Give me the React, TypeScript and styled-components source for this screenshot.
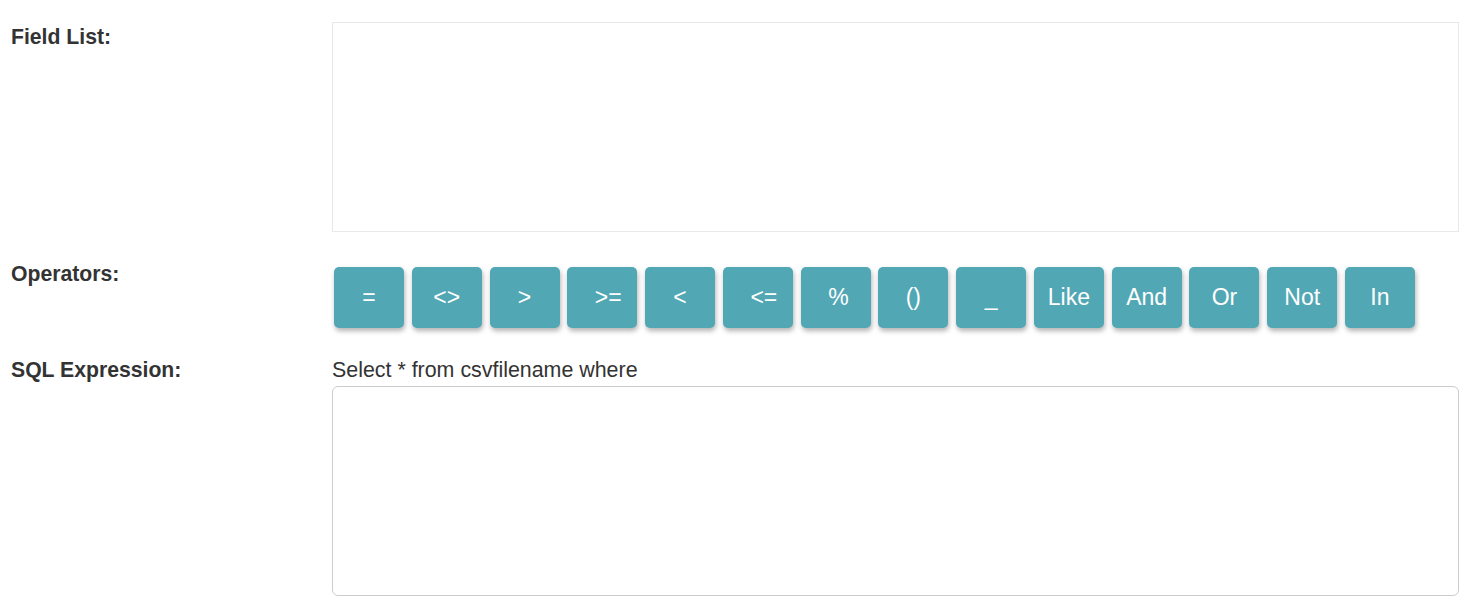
import React from "react";
import styled, { createGlobalStyle } from "styled-components";

const GlobalStyle = createGlobalStyle`
  html, body {
    margin: 0;
    padding: 0;
    background: #ffffff;
  }
  body {
    font-family: "Liberation Sans", Arial, Helvetica, sans-serif;
    color: #333333;
  }
`;

const Page = styled.div`
  display: grid;
  grid-template-columns: 321px 1fr;
  row-gap: 27px;
  padding: 22px 12px 16px 11px;
  font-size: 21px;
  line-height: 30px;
`;

const Label = styled.div`
  font-weight: bold;
  font-size: 21.2px;
  line-height: 30px;
  color: #333333;
`;

const Cell = styled.div`
  display: flex;
  flex-direction: column;
  min-width: 0;
`;

const FieldListBox = styled.div`
  height: 210px;
  border: 1px solid #e8e8e8;
  box-sizing: border-box;
  background: #ffffff;
`;

const ButtonRow = styled.div`
  display: flex;
  gap: 7.78px;
  padding: 8px 0 0 2px;
`;

const OpButton = styled.button<{ $shift?: number }>`
  width: 70px;
  height: 61px;
  flex: 0 0 70px;
  box-sizing: border-box;
  border: none;
  border-radius: 5px;
  background: #52a7b5;
  color: #ffffff;
  font-family: "Liberation Sans", Arial, Helvetica, sans-serif;
  font-size: 23px;
  line-height: 1;
  display: flex;
  align-items: center;
  justify-content: center;
  padding: 0 0 0 ${(p) => (p.$shift ?? 0) * 2}px;
  box-shadow: 1px 3px 5px rgba(0, 0, 0, 0.3);
  cursor: pointer;
`;

const Caption = styled.div`
  font-size: 21.4px;
  line-height: 31px;
  color: #333333;
`;

const SqlArea = styled.textarea`
  height: 210px;
  width: 100%;
  box-sizing: border-box;
  border: 1px solid #cccccc;
  border-radius: 6px;
  resize: none;
  font-family: "Liberation Sans", Arial, Helvetica, sans-serif;
  font-size: 21px;
  padding: 6px 12px;
  outline: none;
`;

const operators: { text: string; shift?: number }[] = [
  { text: "=" },
  { text: "<>" },
  { text: ">" },
  { text: ">=", shift: 6 },
  { text: "<" },
  { text: "<=", shift: 6 },
  { text: "%", shift: 3 },
  { text: "()" },
  { text: "_" },
  { text: "Like" },
  { text: "And" },
  { text: "Or" },
  { text: "Not" },
  { text: "In" },
];

export default function App() {
  return (
    <>
      <GlobalStyle />
      <Page>
        <Label>Field List:</Label>
        <Cell>
          <FieldListBox />
        </Cell>

        <Label>Operators:</Label>
        <Cell>
          <ButtonRow>
            {operators.map((op) => (
              <OpButton key={op.text} $shift={op.shift}>
                {op.text}
              </OpButton>
            ))}
          </ButtonRow>
        </Cell>

        <Label>SQL Expression:</Label>
        <Cell>
          <Caption>Select * from csvfilename where</Caption>
          <SqlArea />
        </Cell>
      </Page>
    </>
  );
}
